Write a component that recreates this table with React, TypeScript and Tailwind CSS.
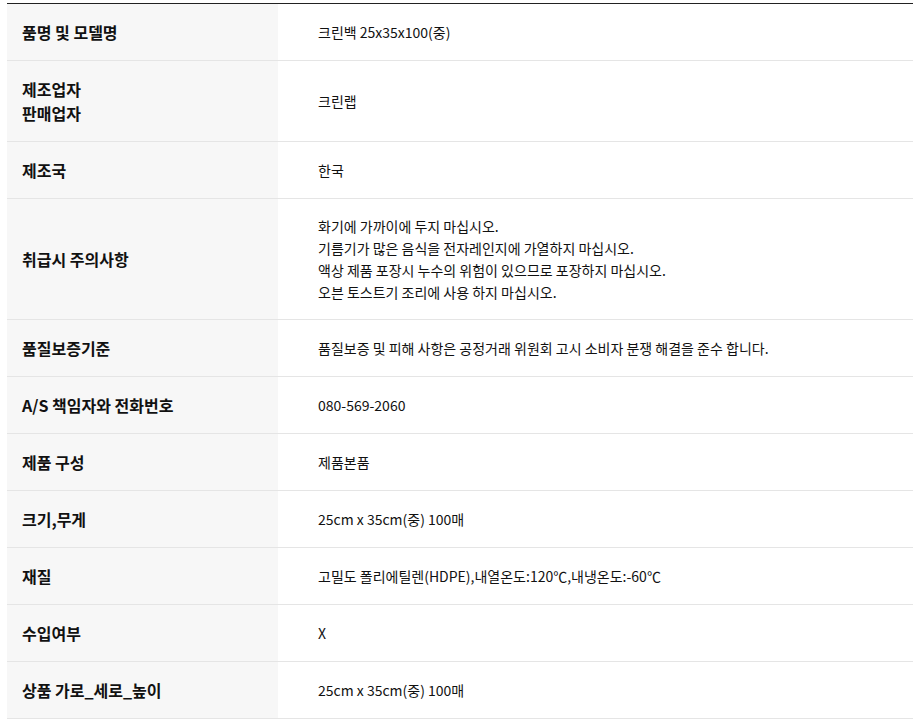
const rows: { label: string[]; value: string[] }[] = [
  { label: ["품명 및 모델명"], value: ["크린백 25x35x100(중)"] },
  { label: ["제조업자", "판매업자"], value: ["크린랩"] },
  { label: ["제조국"], value: ["한국"] },
  {
    label: ["취급시 주의사항"],
    value: [
      "화기에 가까이에 두지 마십시오.",
      "기름기가 많은 음식을 전자레인지에 가열하지 마십시오.",
      "액상 제품 포장시 누수의 위험이 있으므로 포장하지 마십시오.",
      "오븐 토스트기 조리에 사용 하지 마십시오.",
    ],
  },
  {
    label: ["품질보증기준"],
    value: ["품질보증 및 피해 사항은 공정거래 위원회 고시 소비자 분쟁 해결을 준수 합니다."],
  },
  { label: ["A/S 책임자와 전화번호"], value: ["080-569-2060"] },
  { label: ["제품 구성"], value: ["제품본품"] },
  { label: ["크기,무게"], value: ["25cm x 35cm(중) 100매"] },
  { label: ["재질"], value: ["고밀도 폴리에틸렌(HDPE),내열온도:120℃,내냉온도:-60℃"] },
  { label: ["수입여부"], value: ["X"] },
  { label: ["상품 가로_세로_높이"], value: ["25cm x 35cm(중) 100매"] },
];

export default function App() {
  return (
    <div
      className="min-h-[725px] bg-white pl-[7px] pt-[3px]"
      style={{ fontFamily: '"Noto Sans CJK KR", "Noto Sans", sans-serif' }}
    >
      <div className="border-t border-[#222222]">
        {rows.map((row, i) => (
          <div key={i} className="grid grid-cols-[271px_1fr] border-b border-[#e5e5e5]">
            <div className="flex flex-col justify-center bg-[#f7f7f7] py-4 pl-[15px] text-[16px] font-bold leading-6 text-[#111111]">
              {row.label.map((l) => (
                <span key={l}>{l}</span>
              ))}
            </div>
            <div className="flex flex-col justify-center py-4 pl-10 text-[14px] leading-[22px] text-[#111111]">
              {row.value.map((v) => (
                <span key={v}>{v}</span>
              ))}
            </div>
          </div>
        ))}
      </div>
    </div>
  );
}
